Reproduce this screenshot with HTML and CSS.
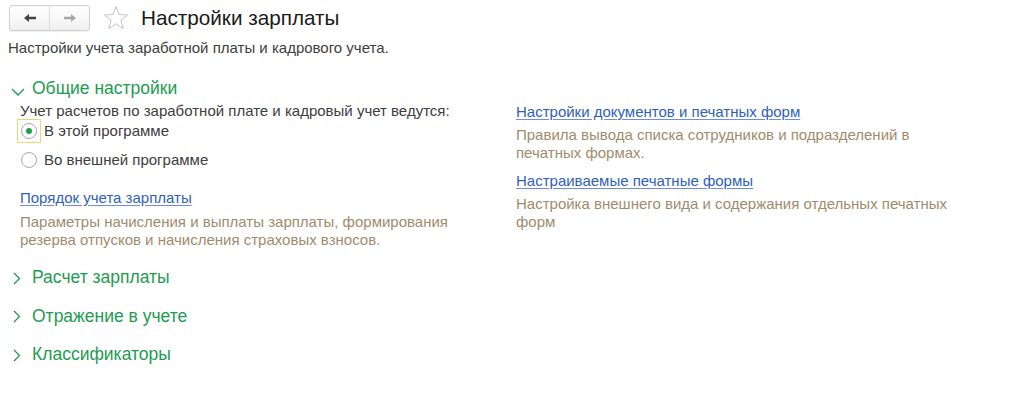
FILE: index.html
```html
<!DOCTYPE html>
<html lang="ru">
<head>
<meta charset="utf-8">
<title>Настройки зарплаты</title>
<link rel="stylesheet" href="styles.css">
</head>
<body>
<div class="page">
  <div class="header">
    <div class="nav">
      <button class="nav-btn">
        <svg width="14" height="10" viewBox="0 0 14 10"><path d="M1 5 L6 1 L6 3.8 L13 3.8 L13 6.2 L6 6.2 L6 9 Z" fill="#444"/></svg>
      </button>
      <button class="nav-btn">
        <svg width="14" height="10" viewBox="0 0 14 10"><path d="M13 5 L8 1 L8 3.8 L1 3.8 L1 6.2 L8 6.2 L8 9 Z" fill="#a8a8a8"/></svg>
      </button>
    </div>
    <svg class="star" width="26" height="26" viewBox="0 0 26 26"><path d="M13 1.5 L16.1 9.6 L24.6 9.9 L17.9 15.2 L20.2 23.6 L13 18.8 L5.8 23.6 L8.1 15.2 L1.4 9.9 L9.9 9.6 Z" fill="none" stroke="#c4c4c4" stroke-width="1" stroke-linejoin="miter"/></svg>
    <h1 class="title">Настройки зарплаты</h1>
  </div>
  <p class="subtitle">Настройки учета заработной платы и кадрового учета.</p>

  <section class="group open">
    <div class="group-head">
      <svg class="chev" width="14" height="22" viewBox="0 0 14 22"><path d="M1 12 L7 18 L13 12" fill="none" stroke="#1e9c50" stroke-width="1.3"/></svg>
      <span>Общие настройки</span>
    </div>
    <div class="group-body">
      <div class="col left">
        <div class="label">Учет расчетов по заработной плате и кадровый учет ведутся:</div>
        <div class="radio-row">
          <span class="radio-box focused"><span class="radio checked"></span></span>
          <span class="radio-label">В этой программе</span>
        </div>
        <div class="radio-row">
          <span class="radio-box"><span class="radio"></span></span>
          <span class="radio-label">Во внешней программе</span>
        </div>
        <a class="link first-link" href="#">Порядок учета зарплаты</a>
        <div class="desc">Параметры начисления и выплаты зарплаты, формирования резерва отпусков и начисления страховых взносов.</div>
      </div>
      <div class="col right">
        <a class="link" href="#">Настройки документов и печатных форм</a>
        <div class="desc">Правила вывода списка сотрудников и подразделений в печатных формах.</div>
        <a class="link" href="#">Настраиваемые печатные формы</a>
        <div class="desc">Настройка внешнего вида и содержания отдельных печатных форм</div>
      </div>
    </div>
  </section>

  <section class="group">
    <div class="group-head">
      <svg class="chev" width="14" height="22" viewBox="0 0 14 22"><path d="M3 6 L8.5 11.5 L3 17" fill="none" stroke="#1e9c50" stroke-width="1.3"/></svg>
      <span>Расчет зарплаты</span>
    </div>
  </section>
  <section class="group">
    <div class="group-head">
      <svg class="chev" width="14" height="22" viewBox="0 0 14 22"><path d="M3 6 L8.5 11.5 L3 17" fill="none" stroke="#1e9c50" stroke-width="1.3"/></svg>
      <span>Отражение в учете</span>
    </div>
  </section>
  <section class="group">
    <div class="group-head">
      <svg class="chev" width="14" height="22" viewBox="0 0 14 22"><path d="M3 6 L8.5 11.5 L3 17" fill="none" stroke="#1e9c50" stroke-width="1.3"/></svg>
      <span>Классификаторы</span>
    </div>
  </section>
</div>
</body>
</html>
```

FILE: styles.css
```css
html, body {
  margin: 0;
  padding: 0;
  background: #fff;
}
body {
  font-family: Arial, "Liberation Sans", sans-serif;
  font-size: 15px;
  color: #404040;
}
.page {
  padding-top: 5px;
}
.header {
  display: flex;
  align-items: center;
  padding-left: 9px;
  height: 26px;
}
.nav {
  display: flex;
  width: 81px;
  height: 26px;
  box-sizing: border-box;
  border: 1px solid #cfcfcf;
  border-radius: 3px;
  background: linear-gradient(#ffffff, #f0f0f0);
  box-shadow: 0 1px 1px rgba(0,0,0,0.06);
}
.nav-btn {
  flex: 1;
  border: 0;
  background: transparent;
  padding: 0;
  display: flex;
  align-items: center;
  justify-content: center;
}
.nav-btn + .nav-btn {
  border-left: 1px solid #dcdcdc;
}
.star {
  margin-left: 13px;
}
.title {
  margin: 0 0 0 12px;
  font-size: 20.7px;
  font-weight: normal;
  color: #1a1a1a;
  line-height: 26px;
}
.subtitle {
  margin: 8px 0 0 8px;
  line-height: 18px;
  color: #404040;
}
.group {
  margin-left: 11px;
}
.group-head {
  display: flex;
  align-items: center;
  height: 22px;
  margin-top: 16.5px;
  color: #1e9c50;
  font-size: 17.5px;
}
.group.open .group-head {
  margin-top: 20px;
}
.group-head .chev {
  margin-right: 7px;
}
.group-body {
  display: grid;
  grid-template-columns: 496px 440px;
  padding: 3px 0 1px 9px;
}
.col {
  display: flex;
  flex-direction: column;
  align-items: flex-start;
}
.col.right {
  padding-top: 1px;
}
.label {
  line-height: 18px;
}
.radio-row {
  display: flex;
  align-items: center;
  height: 24px;
  margin-left: -3px;
  margin-top: -1px;
}
.radio-row + .radio-row {
  margin-top: 5px;
}
.radio-box {
  width: 24px;
  height: 24px;
  box-sizing: border-box;
  display: flex;
  align-items: center;
  justify-content: center;
  border: 1px solid transparent;
}
.radio-box.focused {
  border-color: #f2d37a;
}
.radio {
  width: 16px;
  height: 16px;
  box-sizing: border-box;
  border: 1px solid #a9a9a9;
  border-radius: 50%;
  background: #fff;
  display: flex;
  align-items: center;
  justify-content: center;
}
.radio.checked::after {
  content: "";
  width: 6px;
  height: 6px;
  border-radius: 50%;
  background: #1e9c50;
}
.radio-label {
  margin-left: 3px;
  line-height: 18px;
}
.link {
  color: #2f5fc0;
  text-decoration: underline;
  text-decoration-color: #6c8fd8;
  text-underline-offset: 2px;
  line-height: 18px;
}
.first-link {
  margin-top: 17px;
}
.desc {
  color: #a08c6c;
  line-height: 18px;
  margin-top: 6px;
  max-width: 432px;
}
.col.right .desc {
  margin-top: 5px;
}
.col.right .desc + .link {
  margin-top: 10px;
}
```
